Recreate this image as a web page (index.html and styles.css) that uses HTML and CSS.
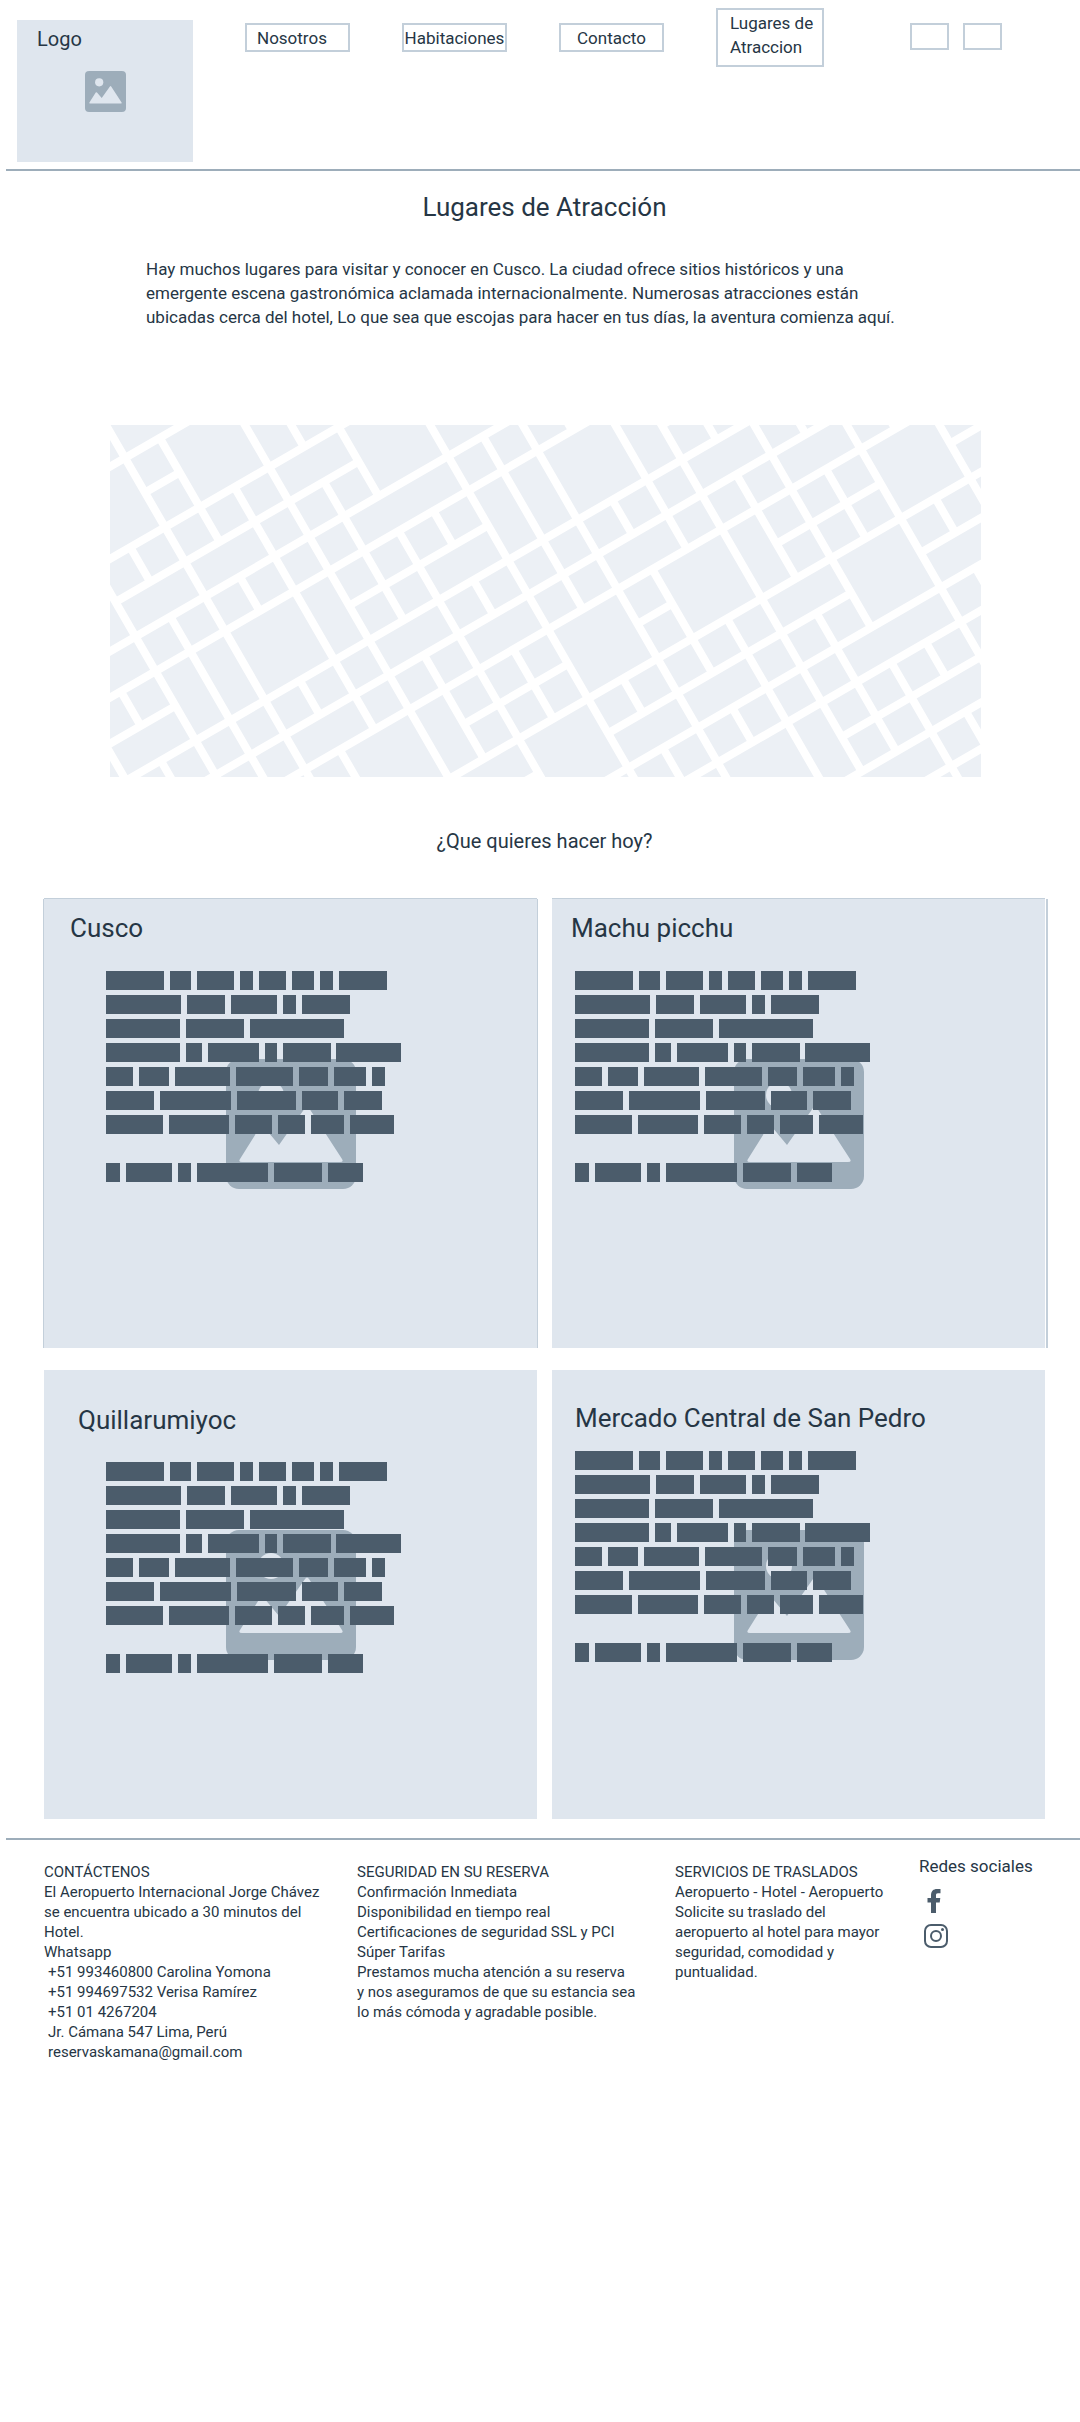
FILE: index.html
```html
<!DOCTYPE html>
<html lang="es">
<head>
<meta charset="utf-8">
<title>Lugares de Atracción</title>
<meta name="viewport" content="width=device-width, initial-scale=1">
<link rel="stylesheet" href="styles.css">
</head>
<body>
<svg class="defs" aria-hidden="true">
  <symbol id="picture" viewBox="0 0 130 130">
    <rect width="130" height="130" rx="13" fill="#9dadba"/>
    <circle cx="45" cy="36" r="13" fill="#dfe6ee"/>
    <path fill="#dfe6ee" d="M14 100L34 68Q36 66 38 68L53 86L79 49Q81 46 83 49L116 100Q118 103 114 103H16Q12 103 14 100Z"/>
  </symbol>
  <symbol id="lines" viewBox="0 0 295 211">
    <g stroke="#4b5c6b" stroke-width="19">
      <path d="M0 9.500H58M64 9.500H85M91 9.500H128M134 9.500H147M153 9.500H180M186 9.500H208M214 9.500H227M233 9.500H281"/>
      <path d="M0 33.500H75M81 33.500H119M125 33.500H171M177 33.500H190M196 33.500H244"/>
      <path d="M0 57.500H74M80 57.500H138M144 57.500H238"/>
      <path d="M0 81.500H74M80 81.500H96M102 81.500H153M159 81.500H171M177 81.500H225M230 81.500H295"/>
      <path d="M0 105.500H27M33 105.500H63M69 105.500H124M130 105.500H187M193 105.500H222M228 105.500H260M266 105.500H279"/>
      <path d="M0 129.500H48M54 129.500H125M131 129.500H190M196 129.500H232M238 129.500H276"/>
      <path d="M0 153.500H57M63 153.500H123M129 153.500H166M172 153.500H199M205 153.500H238M244 153.500H288"/>
      <path d="M0 201.500H14M20 201.500H66M72 201.500H85M91 201.500H162M168 201.500H216M222 201.500H257"/>
    </g>
  </symbol>
</svg>

<header class="header">
  <a class="logo" href="#">
    <span class="logo-text">Logo</span>
    <svg class="logo-picture" aria-hidden="true"><use href="#picture"/></svg>
  </a>
  <nav class="nav">
    <a class="nav-link nav-start" href="#">Nosotros</a>
    <a class="nav-link" href="#">Habitaciones</a>
    <a class="nav-link" href="#">Contacto</a>
    <a class="nav-link nav-tall" href="#">Lugares de Atraccion</a>
  </nav>
  <div class="tools">
    <button class="tool" type="button" aria-label="Idioma"></button>
    <button class="tool" type="button" aria-label="Moneda"></button>
  </div>
</header>

<main class="main">
  <h1 class="title">Lugares de Atracción</h1>
  <p class="intro">Hay muchos lugares para visitar y conocer en Cusco. La ciudad ofrece sitios históricos y una<br>emergente escena gastronómica aclamada internacionalmente. Numerosas atracciones están<br>ubicadas cerca del hotel, Lo que sea que escojas para hacer en tus días, la aventura comienza aquí.</p>

  <svg class="map" viewBox="0 0 871 352" preserveAspectRatio="xMidYMid slice" role="img" aria-label="Mapa">
    <rect width="871" height="352" fill="#ecf0f5"/>
    <!-- Streets on a unit grid, turned 30 degrees -->
    <g transform="rotate(-30) translate(-3.500 36) scale(40.100 40)" fill="none" stroke="#fff" stroke-width=".2">
      <path d="M-2 0H3M0 1H1M-3 2H7M-2 3H5M-4 4H10M-5 5H12M-4 6H-2M3 6H7M12 6H14M-5 7H15M-3 8H17M-1 9H18M4 10H7M9 10H10M13 10H16M18 10H20M2 11H20M4 12H5M7 12H14M16 12H19M6 13H19M8 14H18M12 15H17M11 16H17M13 17H16"/>
      <path d="M-4 6V7M-3 5V6M-3 7V9M-2 1V9M-1 2V3M-1 4V9M0 -1V10M1 0V3M1 4V5M1 7V8M1 9V11M2 2V9M3 0V12M4 1V2M4 3V7M4 8V11M5 2V4M5 5V13M6 5V6M6 7V8M6 9V11M7 2V15M8 4V9M8 11V12M8 13V15M9 3V15M10 4V5M10 7V8M10 9V12M10 13V14M11 4V9M11 11V17M12 5V16M13 6V7M13 8V11M13 12V16M14 6V13M14 14V19M15 7V8M15 9V11M15 14V15M15 16V18M16 7V16M17 8V9M17 11V12M17 13V14M18 9V13"/>
    </g>
  </svg>

  <h2 class="question">¿Que quieres hacer hoy?</h2>

  <div class="cards">
    <article class="card card-framed">
      <svg class="card-picture" aria-hidden="true"><use href="#picture"/></svg>
      <div class="card-body card-cusco">
        <h3 class="card-title">Cusco</h3>
        <svg class="card-lines" aria-hidden="true"><use href="#lines"/></svg>
      </div>
    </article>
    <article class="card card-edged">
      <svg class="card-picture" aria-hidden="true"><use href="#picture"/></svg>
      <div class="card-body card-machu">
        <h3 class="card-title">Machu picchu</h3>
        <svg class="card-lines" aria-hidden="true"><use href="#lines"/></svg>
      </div>
    </article>
    <article class="card">
      <svg class="card-picture" aria-hidden="true"><use href="#picture"/></svg>
      <div class="card-body card-quilla">
        <h3 class="card-title">Quillarumiyoc</h3>
        <svg class="card-lines" aria-hidden="true"><use href="#lines"/></svg>
      </div>
    </article>
    <article class="card">
      <svg class="card-picture" aria-hidden="true"><use href="#picture"/></svg>
      <div class="card-body card-mercado">
        <h3 class="card-title">Mercado Central de San Pedro</h3>
        <svg class="card-lines" aria-hidden="true"><use href="#lines"/></svg>
      </div>
    </article>
  </div>
</main>

<footer class="footer">
  <section class="column">
    <h2 class="column-title">CONTÁCTENOS</h2>
    <p>El Aeropuerto Internacional Jorge Chávez<br>se encuentra ubicado a 30 minutos del<br>Hotel.</p>
    <p>Whatsapp</p>
    <address class="contact">+51 993460800 Carolina Yomona<br>+51 994697532 Verisa Ramírez<br>+51 01 4267204<br>Jr. Cámana 547 Lima, Perú<br>reservaskamana@gmail.com</address>
  </section>
  <section class="column">
    <h2 class="column-title">SEGURIDAD EN SU RESERVA</h2>
    <p>Confirmación Inmediata<br>Disponibilidad en tiempo real<br>Certificaciones de seguridad SSL y PCI<br>Súper Tarifas<br>Prestamos mucha atención a su reserva<br>y nos aseguramos de que su estancia sea<br>lo más cómoda y agradable posible.</p>
  </section>
  <section class="column">
    <h2 class="column-title">SERVICIOS DE TRASLADOS</h2>
    <p>Aeropuerto - Hotel - Aeropuerto<br>Solicite su traslado del<br>aeropuerto al hotel para mayor<br>seguridad, comodidad y<br>puntualidad.</p>
  </section>
  <section class="social">
    <h2 class="social-title">Redes sociales</h2>
    <a class="social-link" href="#" aria-label="Facebook"><svg width="24" height="24" viewBox="0 0 24 24" aria-hidden="true"><path fill="#4b5c6b" d="M7 24V13.500H3.500V9H7V6.500C7 2 9.500 0 13 0H16.500V4.200H14C12.300 4.200 12 5 12 6.500V9H16.300L15.700 13.500H12V24Z"/></svg></a>
    <a class="social-link" href="#" aria-label="Instagram"><svg width="24" height="24" viewBox="0 0 24 24" fill="none" stroke="#4b5c6b" stroke-width="2" aria-hidden="true"><rect x="1" y="1" width="22" height="22" rx="6"/><circle cx="12" cy="12" r="5"/><circle cx="18.500" cy="5.500" r="1.500" fill="#4b5c6b" stroke="none"/></svg></a>
  </section>
</footer>
</body>
</html>
```
FILE: styles.css
```css
* {
  box-sizing: border-box;
}

body {
  margin: 0;
  background: #fff;
  color: #263645;
  font-family: Roboto, "Liberation Sans", sans-serif;
  font-size: 17px;
  line-height: 24px;
}

h1,
h2,
h3,
p {
  margin: 0;
  font-weight: 400;
}

a {
  color: inherit;
  text-decoration: none;
}

.defs {
  display: none;
}

.header {
  display: flex;
  align-items: flex-start;
  margin-left: 6px;
  padding: 8px 0 7px 11px;
  border-bottom: 2px solid #9dadba;
}

.logo {
  display: grid;
  width: 176px;
  height: 142px;
  margin-top: 12px;
  background: #dfe6ee;
}

.logo-text {
  grid-area: 1 / 1;
  padding: 7px 20px;
  font-size: 20px;
}

.logo-picture {
  grid-area: 1 / 1;
  place-self: center;
  width: 41px;
  height: 41px;
}

.nav {
  display: flex;
  align-items: center;
  gap: 52px;
  margin-left: 52px;
}

.nav-link {
  display: flex;
  align-items: center;
  justify-content: center;
  width: 105px;
  height: 29px;
  border: 2px solid #c3cfda;
}

.nav-start {
  justify-content: flex-start;
  padding-left: 10px;
}

.nav-tall {
  width: 108px;
  height: 59px;
  padding: 0 0 6px 12px;
}

.tools {
  display: flex;
  gap: 14px;
  margin: 15px 0 0 86px;
}

.tool {
  width: 39px;
  height: 27px;
  padding: 0;
  border: 2px solid #c3cfda;
  background: none;
}

.main {
  padding: 20px 35px 19px 44px;
}

.title {
  font-size: 26px;
  line-height: 32px;
  text-align: center;
}

.intro {
  margin: 34px 102px 0;
}

.map {
  display: block;
  width: calc(100% - 130px);
  height: auto;
  margin: 96px 64px 0 66px;
}

.question {
  margin: 52px 0 46px;
  font-size: 20px;
  text-align: center;
}

.cards {
  display: grid;
  grid-template-columns: 1fr 1fr;
  gap: 22px 15px;
}

.card {
  display: grid;
  min-height: 449px;
  background: #dfe6ee;
}

.card-framed {
  box-shadow: -1px 0 #c3cfda, 1px 0 #c3cfda, 0 -1px #c3cfda;
}

.card-edged {
  box-shadow: 1px 0 #fff, 3px 0 #c3cfda, 0 -1px #c3cfda;
}

.card-picture {
  grid-area: 1 / 1;
  place-self: center;
  width: 130px;
  height: 130px;
}

.card-body {
  grid-area: 1 / 1;
  display: grid;
  align-content: start;
}

.card-title {
  font-size: 26px;
  line-height: 32px;
}

.card-lines {
  width: 295px;
  height: 211px;
}

.card-cusco {
  padding: 13px 26px;
  gap: 27px;
}

.card-machu {
  padding: 13px 19px;
  gap: 27px;
}

.card-quilla {
  padding: 34px;
  gap: 26px;
}

.card-mercado {
  padding: 32px 23px;
  gap: 17px;
}

.card-cusco .card-lines {
  margin-left: 36px;
}

.card-quilla .card-lines {
  margin-left: 28px;
}

.card-machu .card-lines {
  margin-left: 4px;
}

.footer {
  display: grid;
  grid-template-columns: 313fr 318fr 244fr 161fr;
  margin-left: 6px;
  padding: 14px 0 40px 38px;
  border-top: 2px solid #9dadba;
  font-size: 15px;
  line-height: 20px;
}

.column {
  padding-top: 8px;
}

.column-title {
  font-size: 15px;
}

.contact {
  padding-left: 4px;
  font-style: normal;
}

.social {
  display: grid;
  justify-items: start;
  align-content: start;
  gap: 11px;
}

.social-title {
  font-size: 17px;
  line-height: 24px;
}

.social-link {
  display: block;
  width: 24px;
  height: 24px;
  margin-left: 5px;
}

.social-link svg {
  display: block;
}
```
